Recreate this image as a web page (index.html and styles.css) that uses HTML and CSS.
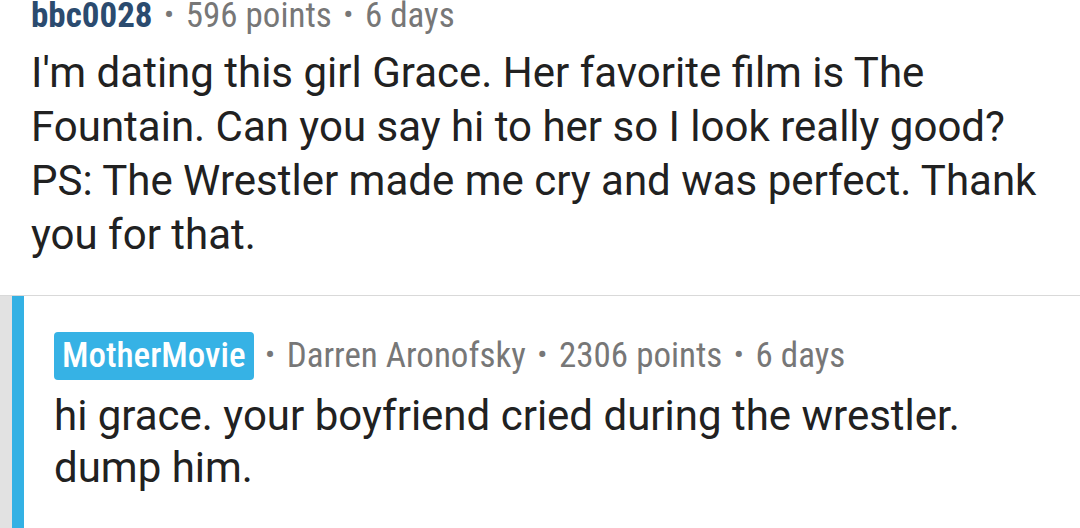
FILE: index.html
```html
<!DOCTYPE html>
<html lang="en">
<head>
    <meta charset="UTF-8">
    <meta name="viewport" content="width=device-width, initial-scale=1.0">
    <title>Comment thread</title>
    <link rel="stylesheet" href="styles.css">
</head>
<body>

    <div class="comment">
        <div class="meta">
            <span class="author">bbc0028</span>
            <span class="dot">&bull;</span> 596 points <span class="dot">&bull;</span> 6 days
        </div>
        <p class="body">I'm dating this girl Grace. Her favorite film is The Fountain. Can you say hi to her so I look really good? PS: The Wrestler made me cry and was perfect. Thank you for that.</p>
    </div>

    <div class="reply">
        <div class="gutter"></div>
        <div class="bar"></div>
        <div class="reply-content">
            <div class="meta">
                <span class="tag">MotherMovie</span>
                <span class="dot">&bull;</span> Darren Aronofsky <span class="dot">&bull;</span> 2306 points <span class="dot">&bull;</span> 6 days
            </div>
            <p class="body">hi grace. your boyfriend cried during the wrestler. dump him.</p>
        </div>
    </div>

</body>
</html>
```

FILE: styles.css
```css
body {
    margin: 0;
    padding: 0;
    background-color: #ffffff;
    color: #212121;
    font-family: Roboto, "Noto Sans", sans-serif;
    overflow: hidden;
}

.comment {
    display: flow-root;
    height: 296px;
    padding: 0 30px 0 31px;
    border-bottom: 1px solid #d9d9d9;
    box-sizing: border-box;
}

.meta {
    font-size: 35px;
    line-height: 40px;
    color: #777777;
    font-stretch: condensed;
    white-space: nowrap;
}

.comment .meta {
    margin-top: -5px;
}

.author {
    color: #2b4b6f;
    font-weight: bold;
}

.dot {
    font-size: 30px;
    vertical-align: 2px;
    margin: 0 3.5px;
}

.body {
    margin: 0;
    font-size: 42px;
    line-height: 54px;
}

.comment .body {
    margin-top: 10px;
}

.reply {
    display: flex;
    height: 232px;
}

.gutter {
    width: 12px;
    background-color: #e2e2e2;
}

.bar {
    width: 12px;
    background-color: #33b1e4;
}

.reply-content {
    flex: 1;
    padding: 36px 30px 0 30px;
}

.tag {
    display: inline-block;
    background-color: #36b2e5;
    color: #ffffff;
    border-radius: 4px;
    padding: 0 8px;
    line-height: 48px;
    font-weight: 500;
}

.reply .body {
    margin-top: 10px;
    line-height: 52px;
}
```
